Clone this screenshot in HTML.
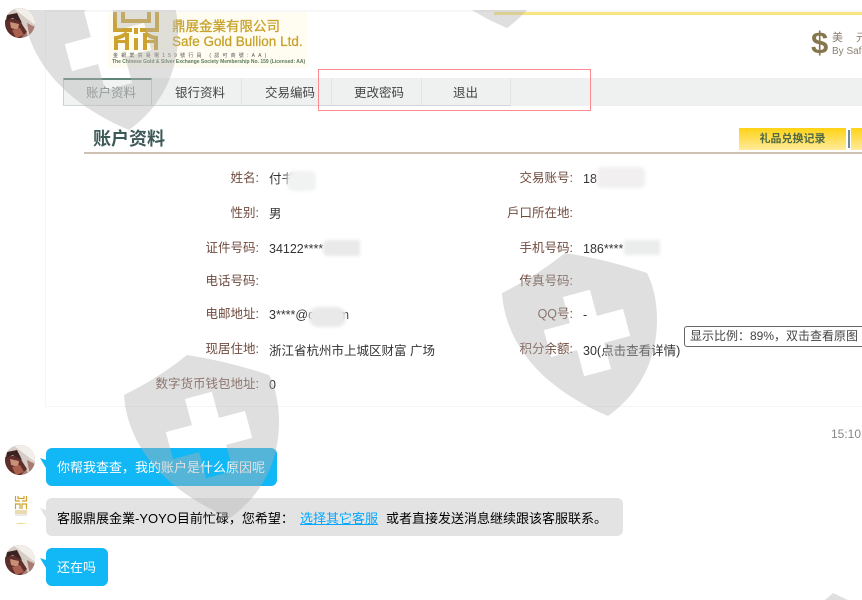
<!DOCTYPE html>
<html lang="zh">
<head>
<meta charset="utf-8">
<title>账户资料</title>
<style>
html,body{margin:0;padding:0;background:#fff;width:862px;height:600px;overflow:hidden}
body{position:relative;font-family:"Liberation Sans","Noto Sans CJK SC",sans-serif;font-size:12px;color:#333}
.a{position:absolute;white-space:nowrap}
.lb{position:absolute;white-space:nowrap;text-align:right;color:#6f4a3e;font-size:12.5px;line-height:16px}
.v{position:absolute;white-space:nowrap;color:#333;font-size:12.5px;line-height:16px}
.tl{position:absolute;top:85px;font-size:12.5px;line-height:16px;color:#444;white-space:nowrap}
.dv{position:absolute;top:78px;width:1px;height:27px;background:#e2e5e5}
.blur{position:absolute;filter:blur(1.5px)}
.bub{position:absolute;height:38px;line-height:40px;border-radius:6px;font-size:13px;white-space:nowrap;box-sizing:border-box;padding-left:11px}
.blue{background:#12b7f5;color:#fff}
.gray{background:#e3e3e3;color:#000}
.tail{position:absolute;left:40px;width:6px;height:10px;background:#12b7f5;clip-path:polygon(0 0,100% 20%,100% 100%)}
.av{position:absolute;left:5px;width:30px;height:30px;z-index:5}
</style>
</head>
<body>

<!-- screenshot frame -->
<div class="a" style="left:45px;top:10px;width:817px;height:2px;background:#f7f7f7"></div>
<div class="a" style="left:45px;top:10px;width:1px;height:397px;background:#f5f5f5"></div>
<div class="a" style="left:45px;top:406px;width:817px;height:1px;background:#f5f5f5"></div>
<div class="a" style="left:494px;top:12px;width:368px;height:3px;background:#fae47f"></div>

<!-- logo -->
<div class="a" style="left:108px;top:12px;width:199px;height:56px;background:#fffdf1"></div>
<svg class="a" style="left:108px;top:12px" width="56" height="40" viewBox="0 0 56 40">
<g fill="none" stroke="#cda32e" stroke-width="4">
<path d="M7 0V18H24M49 0V18H32"/>
<path d="M15 0V9H41V0"/>
<path d="M8 38V26Q14 25 19 21M19 21V38M48 38V26Q42 25 37 21M37 21V38"/>
<path d="M28 16V22"/>
</g>
<path d="M26 26H30V38H26Z M8 28H19V31H8Z M37 28H48V31H37Z" fill="#cda32e"/>
</svg>
<div class="a" style="left:172px;top:19px;font-size:13.500px;line-height:16px;color:#c8a22c;-webkit-text-stroke:.3px #c8a22c">鼎展金業有限公司</div>
<div class="a" style="left:172px;top:33px;font-size:13.500px;line-height:17px;color:#c8a22c;-webkit-text-stroke:.3px #c8a22c">Safe Gold Bullion Ltd.</div>
<div class="a" style="left:113px;top:53px;font-size:5px;line-height:6px;letter-spacing:3.200px;color:#555">金銀業貿易場159號行員 (認可商號:AA)</div>
<div class="a" style="left:112px;top:59px;font-size:5px;line-height:6px;color:#5c7a5a;font-weight:bold">The Chinese Gold &amp; Silver Exchange Society Membership No. 159 (Licensed: AA)</div>

<!-- dollar -->
<div class="a" style="left:811px;top:25px;font-size:31px;line-height:36px;font-weight:bold;color:#86764e">$</div>
<div class="a" style="left:832px;top:31px;font-size:11px;line-height:14px;color:#8a8070;letter-spacing:13px">美元</div>
<div class="a" style="left:832px;top:45px;font-size:10px;line-height:13px;color:#8a8070">By Safe</div>

<!-- tabs -->
<div class="a" style="left:63px;top:78px;width:799px;height:28px;background:#eff1f1"></div>
<div class="a" style="left:63px;top:105px;width:448px;height:1px;background:#d2d7d7"></div>
<div class="a" style="left:63px;top:78px;width:89px;height:27px;background:#f1f3f3;border-top:2px solid #5f8576;border-right:1px solid #c9d0cf;border-left:1px solid #c9d0cf;box-sizing:border-box"></div>
<div class="tl" style="left:86px;color:#858c8c">账户资料</div>
<div class="tl" style="left:175px">银行资料</div>
<div class="dv" style="left:241px"></div>
<div class="tl" style="left:265px">交易编码</div>
<div class="dv" style="left:331px"></div>
<div class="tl" style="left:354px">更改密码</div>
<div class="dv" style="left:421px"></div>
<div class="tl" style="left:453px">退出</div>
<div class="dv" style="left:510px"></div>

<!-- red highlight -->
<div class="a" style="left:318px;top:69px;width:273px;height:42px;box-sizing:border-box;border:1.500px solid #ff8b90"></div>

<!-- heading -->
<div class="a" style="left:93px;top:128px;font-size:18px;line-height:22px;font-weight:bold;color:#3d5a58">账户资料</div>
<div class="a" style="left:84px;top:152px;width:778px;height:2px;background:#cfc1b2"></div>
<div class="a" style="left:739px;top:128px;width:107px;height:22px;background:linear-gradient(#ffd215,#ffeb9c);text-align:center;line-height:22px;font-size:11px;font-weight:bold;color:#4f6a45">礼品兑换记录</div>
<div class="a" style="left:848px;top:130px;width:2px;height:18px;background:#6f8a96"></div>
<div class="a" style="left:851px;top:128px;width:11px;height:22px;background:linear-gradient(#ffd215,#ffeb9c)"></div>

<!-- left column -->
<div class="lb" style="right:603px;top:170px">姓名:</div>
<div class="lb" style="right:603px;top:205px">性别:</div>
<div class="lb" style="right:603px;top:240px">证件号码:</div>
<div class="lb" style="right:603px;top:273px">电话号码:</div>
<div class="lb" style="right:603px;top:306px">电邮地址:</div>
<div class="lb" style="right:603px;top:341px">现居住地:</div>
<div class="lb" style="right:603px;top:376px">数字货币钱包地址:</div>

<div class="v" style="left:269px;top:171px">付书</div>
<div class="v" style="left:269px;top:206px">男</div>
<div class="v" style="left:269px;top:241px">34122****</div>
<div class="v" style="left:269px;top:307px">3****@qq.com</div>
<div class="v" style="left:269px;top:343px">浙江省杭州市上城区财富 广场</div>
<div class="v" style="left:269px;top:377px">0</div>

<!-- right column -->
<div class="lb" style="right:289px;top:170px">交易账号:</div>
<div class="lb" style="right:289px;top:205px">戶口所在地:</div>
<div class="lb" style="right:289px;top:240px">手机号码:</div>
<div class="lb" style="right:289px;top:273px">传真号码:</div>
<div class="lb" style="right:289px;top:306px">QQ号:</div>
<div class="lb" style="right:289px;top:341px">积分余额:</div>

<div class="v" style="left:583px;top:171px">18</div>
<div class="v" style="left:583px;top:241px">186****</div>
<div class="v" style="left:583px;top:307px">-</div>
<div class="v" style="left:583px;top:343px">30(点击查看详情)</div>

<!-- redaction patches -->
<div class="blur" style="left:287px;top:171px;width:29px;height:20px;border-radius:6px;background:#f1f2f2"></div>
<div class="blur" style="left:323px;top:240px;width:37px;height:16px;border-radius:5px 0 0 5px;background:#e9e9e9"></div>
<div class="blur" style="left:309px;top:307px;width:37px;height:20px;border-radius:9px;background:#e9e9e9"></div>
<div class="blur" style="left:597px;top:167px;width:48px;height:21px;border-radius:5px;background:#f1efef"></div>
<div class="blur" style="left:624px;top:240px;width:36px;height:15px;background:#ebeded"></div>

<!-- tooltip -->
<div class="a" style="left:684px;top:326px;width:190px;height:21px;box-sizing:border-box;border:1px solid #666;border-radius:3px;background:#fff;line-height:19px;padding-left:5px;font-size:12px;color:#444;z-index:3">显示比例：89%，双击查看原图</div>

<!-- chat -->
<div class="a" style="left:831px;top:427px;font-size:12px;line-height:15px;color:#888">15:10</div>

<div class="tail" style="top:458px"></div>
<div class="bub blue" style="left:46px;top:448px;width:231px">你帮我查查，我的账户是什么原因呢</div>

<div class="tail" style="top:508px;background:#e3e3e3"></div>
<div class="bub gray" style="left:46px;top:498px;width:577px;line-height:41px">客服鼎展金業-YOYO目前忙碌，您希望：
<span class="a" style="left:254px;top:0;color:#00a8ff;text-decoration:underline">选择其它客服</span>
<span class="a" style="left:340px;top:0">或者直接发送消息继续跟该客服联系。</span></div>

<div class="tail" style="top:558px"></div>
<div class="bub blue" style="left:46px;top:548px;width:62px">还在吗</div>

<!-- service logo avatar -->
<svg class="a" style="left:12px;top:495px;z-index:5" width="18" height="30" viewBox="0 0 18 30">
<g fill="none" stroke="#cda32e" stroke-width="1.200">
<path d="M3.500 1V6H8M14.500 1V6H10M6 1V3.500H12V1M3.500 14V9H8V14M14.500 14V9H10V14"/>
</g>
<path d="M3 16H15M3 18H15" stroke="#d6b460" stroke-width="1"/>
<path d="M3 20H15" stroke="#bbb" stroke-width=".6"/>
<path d="M3 29Q9 26.500 15 29Z" fill="#ecd98e"/>
</svg>

<!-- watermark -->
<svg class="a" style="left:0;top:0;z-index:4;pointer-events:none" width="862" height="600" viewBox="0 0 862 600">
<defs>
<clipPath id="c"><rect x="0" y="10" width="862" height="590"/></clipPath>
<path id="s" fill-rule="evenodd" fill="#b2b2b2" fill-opacity=".42" d="M0 0Q-30 24-63 40C-60 85-30 132 43 163C72 142 92 110 92 67Q92 40 82 20Q40 6 0 0ZM-2.100 44L24.900 36.800L31.900 62.900L58 55.900L65.200 82.900L39.100 89.900L46.100 116L19.100 123.200L12.100 97.100L-14 104.100L-21.200 77.100L4.900 70.100Z"/>
</defs>
<g clip-path="url(#c)">
<use href="#s" transform="translate(86 -33)"/>
<use href="#s" transform="translate(464 -135)"/>
</g>
<use href="#s" transform="translate(565 253)"/>
<use href="#s" transform="translate(187 355)"/>
<polygon points="833,593 825,600 848,600" fill="#b2b2b2" fill-opacity=".42"/>
</svg>

<!-- avatars -->
<svg width="0" height="0" style="position:absolute">
<defs>
<clipPath id="ac"><circle cx="15" cy="15" r="15"/></clipPath>
<g id="avatar">
<g clip-path="url(#ac)">
<rect width="30" height="30" fill="#a98078"/>
<path d="M0 0H30V30H24L15 12L0 12Z" fill="#d6cdc6"/>
<path d="M8 0L30 17V4L20 0Z" fill="#f2eee9"/>
<path d="M0 12L13 10L22 24L16 30H0Z" fill="#5e2f2a"/>
<path d="M5 14L14 16L13 22L6 20Z" fill="#c89078"/>
<path d="M7 22L15 20L19 27L11 30Z" fill="#a9604e"/>
<path d="M2 7L12 5L17 15L8 10L1 13Z" fill="#3c2220"/>
<path d="M22 15L30 19V30H25Z" fill="#a97a70"/>
</g>
</g>
</defs>
</svg>
<svg class="av" style="top:8px" viewBox="0 0 30 30"><use href="#avatar"/></svg>
<svg class="av" style="top:445px" viewBox="0 0 30 30"><use href="#avatar"/></svg>
<svg class="av" style="top:545px" viewBox="0 0 30 30"><use href="#avatar"/></svg>

</body>
</html>
